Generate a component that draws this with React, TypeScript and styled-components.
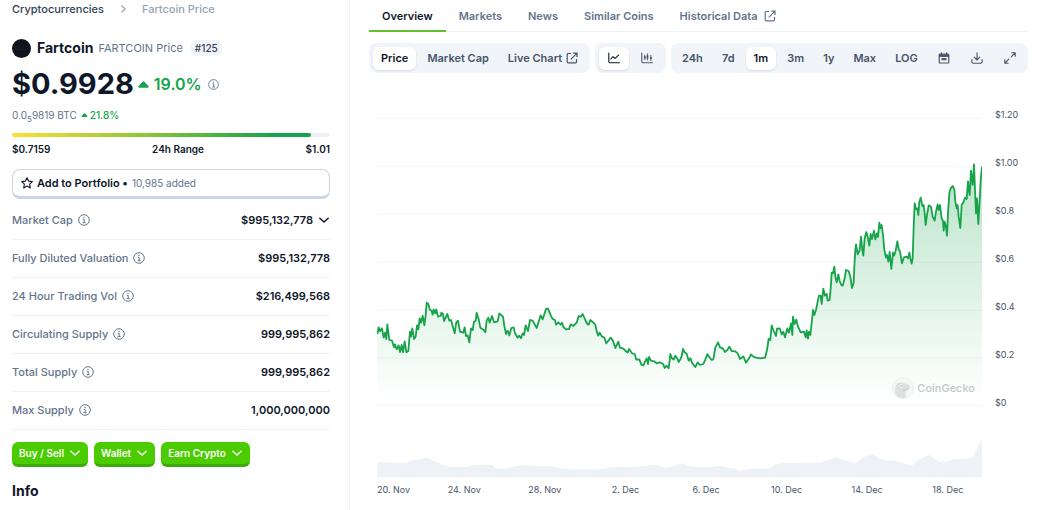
import React from "react";
import styled, { createGlobalStyle } from "styled-components";

const color = {
  ink: "#0f172a",
  text: "#334155",
  strong: "#475569",
  muted: "#64748b",
  faint: "#94a3b8",
  line: "#eff2f5",
  grid: "#f3f5f8",
  panel: "#f1f4f9",
  up: "#16a34a",
  lime: "#4bcc00",
  limeDark: "#3cab0b",
};

const GlobalStyle = createGlobalStyle`
  *, *::before, *::after { box-sizing: border-box; }
  html, body { margin: 0; padding: 0; background: #fff; }
  body { font-family: Inter, "Liberation Sans", sans-serif; font-size: 11px; line-height: 16px; color: ${color.ink}; overflow: hidden; }
  button { font: inherit; border: 0; background: none; padding: 0; margin: 0; cursor: pointer; color: inherit; }
  a { color: inherit; text-decoration: none; }
  svg { display: block; flex: none; }
`;

const Page = styled.div`
  display: flex;
  min-height: 100vh;
`;

const Sidebar = styled.aside`
  flex: 0 0 350px;
  border-right: 1px solid ${color.line};
  padding: 1px 19px 0 12px;
`;

const Main = styled.main`
  flex: 1;
  min-width: 0;
  padding: 0 24px 0 19px;
`;

const Breadcrumb = styled.nav`
  display: flex;
  align-items: center;
  gap: 13px;
  font-weight: 500;
  color: ${color.text};
`;

const Current = styled.span`
  font-weight: 500;
  color: ${color.faint};
`;

const CoinHeader = styled.div`
  display: flex;
  align-items: center;
  height: 20px;
  margin-top: 21px;
`;

const CoinName = styled.h1`
  margin: 0 5px 0 6px;
  font-size: 14px;
  line-height: 20px;
  font-weight: 700;
`;

const CoinSub = styled.span`
  color: ${color.muted};
`;

const Rank = styled.span`
  margin-left: 8px;
  padding: 0 4px;
  border-radius: 5px;
  background: ${color.panel};
  font-size: 10px;
  font-weight: 500;
  color: ${color.text};
`;

const PriceRow = styled.div`
  display: flex;
  align-items: center;
  height: 36px;
  margin-top: 8px;
`;

const Price = styled.span`
  font-size: 29px;
  line-height: 36px;
  font-weight: 700;
`;

const Change = styled.span<{ $large?: boolean }>`
  display: flex;
  align-items: center;
  gap: ${(p) => (p.$large ? 5 : 2)}px;
  margin: 0 6px 0 4px;
  font-size: ${(p) => (p.$large ? 16 : 10)}px;
  font-weight: ${(p) => (p.$large ? 600 : 500)};
  color: ${color.up};
`;

const BtcRow = styled.div`
  display: flex;
  align-items: center;
  margin-top: 5px;
  font-size: 10px;
  color: ${color.muted};
  sub { font-size: 8px; line-height: 0; }
`;

const Track = styled.div`
  height: 4px;
  margin-top: 10px;
  border-radius: 2px;
  background: ${color.line};
`;

const Fill = styled.div`
  width: 94%;
  height: 100%;
  border-radius: 2px;
  background: linear-gradient(90deg, #fde031 0%, #8bc53a 45%, #16a34a 88%);
`;

const RangeLabels = styled.div`
  display: flex;
  justify-content: space-between;
  margin-top: 4px;
  font-size: 10px;
  font-weight: 600;
`;

const PortfolioButton = styled.button`
  display: flex;
  align-items: center;
  width: 100%;
  height: 30px;
  margin-top: 12px;
  padding: 0 8px;
  border: 1px solid #cbd5e1;
  border-bottom-width: 3px;
  border-radius: 8px;
  font-weight: 600;
  gap: 4px;
`;

const Added = styled.span`
  font-size: 10px;
  font-weight: 400;
  color: ${color.muted};
`;

const Stats = styled.table`
  width: 100%;
  margin-top: 2px;
  border-collapse: collapse;
`;

const StatRow = styled.tr`
  height: 38px;
  border-bottom: 1px solid ${color.line};
`;

const StatLabel = styled.th`
  padding: 0;
  text-align: left;
  font-weight: 500;
  color: ${color.muted};
`;

const StatValue = styled.td`
  padding: 0;
  font-weight: 600;
`;

const Inline = styled.span<{ $end?: boolean }>`
  display: flex;
  align-items: center;
  justify-content: ${(p) => (p.$end ? "flex-end" : "flex-start")};
  gap: 5px;
`;

const Actions = styled.div`
  display: flex;
  gap: 6px;
  margin-top: 12px;
`;

const ActionButton = styled.button`
  display: flex;
  align-items: center;
  gap: 5px;
  height: 25px;
  padding: 0 7px;
  border-bottom: 3px solid ${color.limeDark};
  border-radius: 6px;
  background: ${color.lime};
  color: #fff;
  font-size: 10px;
  font-weight: 600;
`;

const InfoTitle = styled.h2`
  margin: 14px 0 0;
  font-size: 14px;
  line-height: 20px;
  font-weight: 700;
`;

const Tabs = styled.nav`
  display: flex;
  height: 32px;
  border-bottom: 1px solid ${color.line};
`;

const Tab = styled.a<{ $active?: boolean }>`
  display: flex;
  align-items: center;
  gap: 6px;
  height: 32px;
  padding: 2px 13px 0;
  border-bottom: 2px solid ${(p) => (p.$active ? "#63bf2c" : "transparent")};
  font-weight: 600;
  color: ${(p) => (p.$active ? color.ink : color.muted)};
`;

const Toolbar = styled.div`
  display: flex;
  gap: 5px;
  margin-top: 11px;
`;

const Segment = styled.div<{ $grow?: boolean }>`
  display: flex;
  align-items: center;
  justify-content: space-between;
  gap: ${(p) => (p.$grow ? 2 : 3)}px;
  flex: ${(p) => (p.$grow ? "1" : "none")};
  height: 30px;
  padding: 3px ${(p) => (p.$grow ? 3 : 4)}px;
  border-radius: 8px;
  background: ${color.panel};
`;

const SegmentButton = styled.button<{ $active?: boolean; $icon?: boolean }>`
  display: flex;
  align-items: center;
  justify-content: center;
  gap: 4px;
  height: 23px;
  padding: 0 ${(p) => (p.$icon ? 9 : 8)}px;
  border-radius: 6px;
  font-weight: 600;
  color: ${(p) => (p.$active ? color.ink : color.strong)};
  background: ${(p) => (p.$active ? "#fff" : "transparent")};
  box-shadow: ${(p) => (p.$active ? "0 1px 2px rgba(15, 23, 42, 0.12)" : "none")};
`;

const ChartArea = styled.section`
  display: flex;
  margin: 27px 0 0 8px;
`;

const Plot = styled.div`
  position: relative;
  flex: 1;
  min-width: 0;
`;

const PlotSvg = styled.svg`
  width: 100%;
  height: 378px;
`;

const PriceAxis = styled.div`
  flex: 0 0 46px;
  padding: 7px 0 0 13px;
  font-size: 9px;
  color: ${color.strong};
`;

const PriceTick = styled.div`
  height: 48px;
`;

const DateAxis = styled.div`
  display: flex;
  margin: 4px 40px 0 8px;
  font-size: 9px;
  color: ${color.strong};
`;

const DateTick = styled.span`
  flex: 1;
  text-align: center;
  white-space: nowrap;
  &:first-child { flex: 0 0 47px; text-align: left; }
`;

const Watermark = styled.div`
  position: absolute;
  right: 7px;
  top: 276px;
  display: flex;
  align-items: center;
  gap: 3px;
  height: 23px;
  font-weight: 500;
  color: #c4c9c8;
`;

/* The price line is kept in three runs, each measured from its own origin. */
const priceRuns: [number, number, string][] = [
  [-21, 570, "22,132 26,112 30,124 36,115 41,143 45,128 49,147 52,103 58,150 66,152 72,172 75,163 80,178 86,166 90,186 95,165 99,187 104,154 109,187 115,183 120,125 123,140 127,115 132,147 137,140 141,106 145,118 149,85 153,98 158,77 163,106 167,76 170,38 175,42 179,58 185,63 188,74 191,58 196,70 199,58 204,80 212,78 214,68 219,72 222,93 232,72 238,92 243,90 248,108 254,130 259,97 264,92 270,125 280,128 284,112 288,138 293,136 298,157 303,115 308,120 312,95 317,93 320,68 326,88 331,113 341,120 346,127 350,92 355,83 359,98 366,78 372,97 383,94 388,70 399,80 403,108 408,132 413,122 418,136 424,114 431,112 435,130 443,143 448,137 453,145 458,130 462,135 467,106 474,123 480,90 488,92 500,114 512,76 518,88 528,57 534,56 541,73 547,86 555,90 558,104 565,97 572,104 576,98 580,111 588,118 597,117 602,103 610,108 620,98 626,78 633,80"],
  [609, 570, "8,72 16,90 22,102 26,104 31,90 40,98 46,104 50,124 55,137 59,128 66,140 73,143 79,160 85,152 92,143 99,152 106,174 115,155 120,173 130,176 137,183 143,188 147,177 156,190 164,192 169,209 178,208 184,224 190,226 200,205 204,222 207,201 213,212 222,214 230,220 240,217 250,223 254,234 260,227 266,235 271,192 276,205 281,209 286,197 293,208 296,216 302,206 305,198 309,177 314,187 320,191 326,212 331,205 337,220 346,231 353,217 360,225 370,222 376,208 382,192 387,200 395,210 400,208 406,172 414,157 420,172 428,175 435,186 442,180 448,170 455,183 466,184 473,190 480,207 490,199 498,218 507,205 513,193 520,200 528,203 540,205 555,203 561,180 566,147 571,150 575,106 580,120 588,138 591,116 598,115"],
  [1209, 150, "0,538 5,553 10,545 15,562 22,535 27,548 33,520 37,555 39,500 44,522 49,509 53,527 62,547 72,545 77,562 80,541 84,566 87,545 91,555 96,510 99,480 103,495 108,480 113,455 117,437 122,437 125,462 130,416 135,437 140,432 143,452 149,450 152,415 155,368 159,370 163,350 166,380 170,397 175,373 179,393 184,405 188,407 194,385 198,360 206,363 211,380 216,414 221,398 223,350 226,300 228,283 233,313 239,300 243,260 247,300 250,317 254,265 259,246 263,260 268,287 272,252 276,267 282,242 286,268 291,250 294,261 298,218 302,235 305,225 309,255 313,300 318,323 321,315 325,335 329,306 334,357 339,308 342,317 347,302 352,274 356,297 360,305 366,340 372,322 380,320 384,325 388,308 391,325 395,341 398,325 401,230 404,160 408,178 412,175 415,195 418,155 422,143 427,168 431,165 434,190 437,225 441,195 446,166 453,170 458,200 464,212 468,185 473,163 476,180 480,165 485,205 489,213 491,242 494,215 498,230 501,257 504,190 508,130 512,115 518,108 523,118 526,155 530,175 533,165 536,200 541,234 545,165 551,155 555,143 560,147 564,94 567,125 569,135 573,62 578,105 582,43 585,120 588,190 591,145 595,222 599,150 602,90 606,50"],
];

const volumeRuns: [number, number, string][] = [
  [-21, 810, "22,277 110,278 125,270 150,268 163,265 178,265 190,272 220,285 240,291 290,291 305,286 335,284 365,285 380,296 405,296 425,290 460,286 500,289 545,289 580,295 600,298 690,298 720,292 800,290 830,287 850,284 870,287 885,293 905,290 925,283 940,280 960,289 989,292"],
  [969, 810, "1,291 40,290 60,287 75,292 100,295 120,302 150,296 210,296 225,284 245,279 360,278 385,270 405,262 430,270 450,273 463,281 490,262 517,251 540,267 560,271 590,273 610,280 637,286 655,269 675,260 688,254 700,264 718,276 745,274 760,267 800,266 820,260 835,225 846,205"],
];

const toPath = (runs: [number, number, string][]) =>
  "M" +
  runs
    .flatMap(([ox, oy, points]) =>
      points.split(" ").map((pair) => {
        const [x, y] = pair.split(",").map(Number);
        return `${x + ox} ${y + oy}`;
      })
    )
    .join("L");

const pricePath = toPath(priceRuns);
const volumePath = toPath(volumeRuns);
const gridLines = [56, 200, 343, 487, 631, 774, 917];

const stats: { label: string; value: string; expandable?: boolean }[] = [
  { label: "Market Cap", value: "$995,132,778", expandable: true },
  { label: "Fully Diluted Valuation", value: "$995,132,778" },
  { label: "24 Hour Trading Vol", value: "$216,499,568" },
  { label: "Circulating Supply", value: "999,995,862" },
  { label: "Total Supply", value: "999,995,862" },
  { label: "Max Supply", value: "1,000,000,000" },
];

const priceTicks = ["$1.20", "$1.00", "$0.8", "$0.6", "$0.4", "$0.2", "$0"];
const dateTicks = ["20. Nov", "24. Nov", "28. Nov", "2. Dec", "6. Dec", "10. Dec", "14. Dec", "18. Dec"];
const ranges = ["24h", "7d", "1m", "3m", "1y", "Max", "LOG"];

const InfoIcon = ({ size = 12 }: { size?: number }) => (
  <svg width={size} height={size} viewBox="0 0 12 12" fill="none" stroke={color.muted}>
    <circle cx="6" cy="6" r="5.3" strokeWidth="1" />
    <path d="M4.7 5.3H6.2V8.7M4.5 8.7H7.7" strokeWidth="1" />
    <circle cx="6" cy="3.4" r="0.7" fill={color.muted} stroke="none" />
  </svg>
);

const Chevron = () => (
  <svg width="12" height="12" viewBox="0 0 12 12" fill="none" stroke="currentColor" strokeWidth="1.5" strokeLinecap="round" strokeLinejoin="round">
    <path d="M1.8 4.2L6 8L10.2 4.2" />
  </svg>
);

const CaretUp = ({ width, height }: { width: number; height: number }) => (
  <svg width={width} height={height} viewBox="0 0 11 7" fill={color.up}>
    <path d="M4.7 0.7Q5.5 0 6.3 0.7L10.4 5Q11.2 6.6 9.8 6.8H1.2Q-.2 6.6.6 5Z" />
  </svg>
);

const ExternalIcon = () => (
  <svg width="12" height="12" viewBox="0 0 12 12" fill="none" stroke="currentColor" strokeWidth="1.2">
    <path d="M5 1.5H2.2Q1.2 1.5 1.2 2.5V9.8Q1.2 10.8 2.2 10.8H9.5Q10.5 10.8 10.5 9.8V7M7.2 1.2H11V5M11 1.2L4.8 7.4" />
  </svg>
);

const LineIcon = () => (
  <svg width="12" height="12" viewBox="0 0 12 12" fill="none" stroke="currentColor" strokeWidth="1.1" strokeLinecap="round" strokeLinejoin="round">
    <path d="M.8 1V9.6Q.8 10.8 2 10.8H11.4M2.8 7L5 4.6L7 6.4L10.6 3.2" />
  </svg>
);

const CandleIcon = () => (
  <svg width="12" height="12" viewBox="0 0 12 12" fill="none" stroke="currentColor" strokeLinecap="round">
    <path d="M.8 1V9.6Q.8 10.8 2 10.8H11.4" strokeWidth="1.1" />
    <path d="M3.8 3V7.6M6.5 1.8V8M9.9 3.4V8.6" strokeWidth="0.9" />
    <path d="M3.8 4.2V6.4M6.5 3.2V6.4M9.9 5V7" strokeWidth="1.8" strokeLinecap="butt" />
  </svg>
);

const CalendarIcon = () => (
  <svg width="12" height="12" viewBox="0 0 12 12" fill="none" stroke="currentColor" strokeWidth="1.2">
    <rect x="1.2" y="2" width="9.6" height="9" rx="1" />
    <path d="M1.2 3.6H10.8" strokeWidth="2.6" />
    <path d="M3.4 .4V3M8.6 .4V3" />
    <path d="M3.4 7.2H8.6" strokeWidth="2" />
  </svg>
);

const DownloadIcon = () => (
  <svg width="12" height="12" viewBox="0 0 12 12" fill="none" stroke="currentColor" strokeWidth="1.1" strokeLinecap="round" strokeLinejoin="round">
    <path d="M.9 7.6V10Q.9 11.2 2.1 11.2H9.9Q11.1 11.2 11.1 10V7.6M6 .8V7.8M3.2 5.2L6 8L8.8 5.2" />
  </svg>
);

const ExpandIcon = () => (
  <svg width="12" height="12" viewBox="0 0 12 12" fill="none" stroke="currentColor" strokeWidth="1.1" strokeLinecap="round" strokeLinejoin="round">
    <path d="M7.8 .8H11.2V4.2M11 1L7.2 4.8M4.2 11.2H.8V7.8M1 11L4.8 7.2" />
  </svg>
);

const CoinIcon = () => (
  <svg width="19" height="19" viewBox="0 0 19 19">
    <circle cx="9.5" cy="9.5" r="9.5" fill="#10121c" />
    <path d="M3 8H16M3 10.5H16" stroke="#20232d" strokeWidth="0.8" strokeDasharray="1.5 1" />
  </svg>
);

const GeckoIcon = () => (
  <svg width="22" height="22" viewBox="0 0 22 22">
    <circle cx="11" cy="11" r="10.4" fill="#f5f7f6" stroke="#e9eceb" strokeWidth="0.9" />
    <path d="M3.5 18C2.8 12 3.2 6.2 7.2 5.4C9.5 4.9 11 6 13.4 6.4C16 6.7 18.2 8 18 10C17.8 12 15.8 12.5 14.4 13.8C13 15.4 14.4 17 13.4 20.4Q8 22 3.5 18Z" fill="#dce0de" />
    <circle cx="9.4" cy="9" r="2" fill="#eef1ef" />
    <circle cx="9.6" cy="9" r="1.1" fill="#c6cbc9" />
    <path d="M10.5 13.3Q14 13.6 17 11.2" fill="none" stroke="#c2c7c5" strokeWidth="0.8" />
  </svg>
);

export default function App() {
  return (
    <>
      <GlobalStyle />
      <Page>
        <Sidebar>
          <Breadcrumb aria-label="Breadcrumb">
            <a href="#coins">Cryptocurrencies</a>
            <svg width="12" height="12" viewBox="0 0 12 12" fill="none" stroke={color.faint} strokeWidth="1.2">
              <path d="M4.5 2.5L8 6L4.5 9.5" />
            </svg>
            <Current aria-current="page">Fartcoin Price</Current>
          </Breadcrumb>

          <CoinHeader>
            <CoinIcon />
            <CoinName>Fartcoin</CoinName>
            <CoinSub>FARTCOIN Price</CoinSub>
            <Rank>#125</Rank>
          </CoinHeader>

          <PriceRow>
            <Price>$0.9928</Price>
            <Change $large>
              <CaretUp width={11} height={7} />
              19.0%
            </Change>
            <InfoIcon size={11} />
          </PriceRow>

          <BtcRow>
            <span>0.0<sub>5</sub>9819 BTC</span>
            <Change>
              <CaretUp width={7} height={4} />
              21.8%
            </Change>
          </BtcRow>

          <Track>
            <Fill />
          </Track>
          <RangeLabels>
            <span>$0.7159</span>
            <span>24h Range</span>
            <span>$1.01</span>
          </RangeLabels>

          <PortfolioButton type="button">
            <svg width="12" height="12" viewBox="0 0 12 12" fill="none" stroke={color.ink} strokeWidth="1.1" strokeLinejoin="round">
              <path d="M6 .8L7.6 4.1L11.3 4.6L8.6 7.2L9.3 10.9L6 9.1L2.7 10.9L3.4 7.2L.7 4.6L4.4 4.1Z" />
            </svg>
            <span>Add to Portfolio •</span>
            <Added>10,985 added</Added>
          </PortfolioButton>

          <Stats>
            <tbody>
              {stats.map((s) => (
                <StatRow key={s.label}>
                  <StatLabel scope="row">
                    <Inline>
                      {s.label}
                      <InfoIcon />
                    </Inline>
                  </StatLabel>
                  <StatValue>
                    <Inline $end>
                      {s.value}
                      {s.expandable && (
                        <button type="button" aria-label="Show more">
                          <Chevron />
                        </button>
                      )}
                    </Inline>
                  </StatValue>
                </StatRow>
              ))}
            </tbody>
          </Stats>

          <Actions>
            {["Buy / Sell", "Wallet", "Earn Crypto"].map((label) => (
              <ActionButton key={label} type="button">
                {label}
                <Chevron />
              </ActionButton>
            ))}
          </Actions>
          <InfoTitle>Info</InfoTitle>
        </Sidebar>

        <Main>
          <Tabs>
            <Tab href="#overview" $active>Overview</Tab>
            <Tab href="#markets">Markets</Tab>
            <Tab href="#news">News</Tab>
            <Tab href="#similar">Similar Coins</Tab>
            <Tab href="#history">
              Historical Data
              <ExternalIcon />
            </Tab>
          </Tabs>

          <Toolbar>
            <Segment>
              <SegmentButton type="button" $active>Price</SegmentButton>
              <SegmentButton type="button">Market Cap</SegmentButton>
              <SegmentButton type="button">
                Live Chart
                <ExternalIcon />
              </SegmentButton>
            </Segment>
            <Segment>
              <SegmentButton type="button" aria-label="Line chart" $icon $active><LineIcon /></SegmentButton>
              <SegmentButton type="button" aria-label="Candlestick chart" $icon><CandleIcon /></SegmentButton>
            </Segment>
            <Segment $grow>
              {ranges.map((r) => (
                <SegmentButton key={r} type="button" $active={r === "1m"}>{r}</SegmentButton>
              ))}
              <SegmentButton type="button" aria-label="Pick dates" $icon><CalendarIcon /></SegmentButton>
              <SegmentButton type="button" aria-label="Download" $icon><DownloadIcon /></SegmentButton>
              <SegmentButton type="button" aria-label="Full screen" $icon><ExpandIcon /></SegmentButton>
            </Segment>
          </Toolbar>

          <ChartArea>
            <Plot>
              <PlotSvg viewBox="0 0 1815 1134" preserveAspectRatio="none" role="img" aria-label="Price and volume over one month">
                <defs>
                  <linearGradient id="area" gradientUnits="userSpaceOnUse" x1="0" y1="190" x2="0" y2="900">
                    <stop offset="0" stopColor="#16a34a" stopOpacity="0.3" />
                    <stop offset="1" stopColor="#16a34a" stopOpacity="0" />
                  </linearGradient>
                </defs>
                {gridLines.map((y) => (
                  <path key={y} d={`M0 ${y}H1815`} stroke={color.grid} strokeWidth="1" vectorEffect="non-scaling-stroke" />
                ))}
                <path d={`${pricePath}V917H1Z`} fill="url(#area)" />
                <path d={pricePath} fill="none" stroke={color.up} strokeWidth="1.8" strokeLinejoin="round" vectorEffect="non-scaling-stroke" />
                <path d={`${volumePath}V1132H1Z`} fill="#eef1f6" />
              </PlotSvg>
              <Watermark>
                <GeckoIcon />
                CoinGecko
              </Watermark>
            </Plot>
            <PriceAxis>
              {priceTicks.map((t) => (
                <PriceTick key={t}>{t}</PriceTick>
              ))}
            </PriceAxis>
          </ChartArea>
          <DateAxis>
            {dateTicks.map((t) => (
              <DateTick key={t}>{t}</DateTick>
            ))}
          </DateAxis>
        </Main>
      </Page>
    </>
  );
}
